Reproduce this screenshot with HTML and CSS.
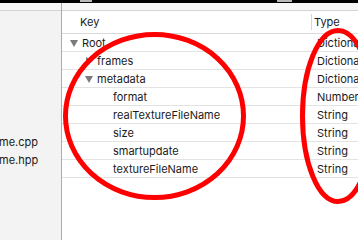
FILE: index.html
```html
<!DOCTYPE html>
<html>
<head>
<meta charset="utf-8">
<link rel="stylesheet" href="styles.css">
</head>
<body>
<div class="screen">
  <div class="topbar">
    <span class="tb-patch tb-a"></span>
    <span class="tb-patch tb-b"></span>
  </div>
  <div class="panes">
    <aside class="sidebar">
      <div class="strip"></div>
      <ul class="files">
        <li class="file">me.cpp</li>
        <li class="file">me.hpp</li>
      </ul>
    </aside>
    <main class="editor">
      <div class="strip"></div>
      <div class="head">
        <div class="c-key">Key</div>
        <div class="c-type"><span class="col-sep"></span>Type</div>
      </div>
      <div class="row">
        <div class="c-key lvl0"><span class="tri down"></span>Root</div>
        <div class="c-type">Dictionary</div>
      </div>
      <div class="row">
        <div class="c-key lvl1"><span class="tri right"></span>frames</div>
        <div class="c-type">Dictionary</div>
      </div>
      <div class="row">
        <div class="c-key lvl1"><span class="tri down"></span>metadata</div>
        <div class="c-type">Dictionary</div>
      </div>
      <div class="row">
        <div class="c-key lvl2"><span class="tri"></span>format</div>
        <div class="c-type">Number</div>
      </div>
      <div class="row">
        <div class="c-key lvl2"><span class="tri"></span>realTextureFileName</div>
        <div class="c-type">String</div>
      </div>
      <div class="row">
        <div class="c-key lvl2"><span class="tri"></span>size</div>
        <div class="c-type">String</div>
      </div>
      <div class="row">
        <div class="c-key lvl2"><span class="tri"></span>smartupdate</div>
        <div class="c-type">String</div>
      </div>
      <div class="row">
        <div class="c-key lvl2"><span class="tri"></span>textureFileName</div>
        <div class="c-type">String</div>
      </div>
    </main>
  </div>
  <svg class="marks" width="358" height="240" viewBox="0 0 358 240">
    <ellipse cx="154.5" cy="116" rx="89" ry="81.5" fill="none" stroke="#ff0000" stroke-width="5"/>
    <ellipse cx="338" cy="116" rx="35.5" ry="85.5" fill="none" stroke="#ff0000" stroke-width="5"/>
  </svg>
</div>
</body>
</html>
```
FILE: styles.css
```css
html, body {
  margin: 0;
  padding: 0;
  background: #ffffff;
}
.screen {
  position: relative;
  width: 358px;
  height: 240px;
  overflow: hidden;
  font-family: Inter, "Liberation Sans", sans-serif;
  font-size: 11px;
  color: #1a1a1a;
}
.topbar {
  height: 3px;
  background: #000;
  position: relative;
}
.tb-patch {
  position: absolute;
  top: 0;
  height: 2px;
  background: #b8b8b8;
}
.tb-a { left: 80px; width: 12px; }
.tb-b { left: 277px; width: 15px; }
.panes {
  display: flex;
  height: 237px;
}
.sidebar {
  width: 61px;
  flex: none;
  background: #f3f3f3;
  border-right: 1px solid #ababab;
  overflow: hidden;
}
.strip {
  height: 7px;
  background: #f7f7f7;
  border-bottom: 1px solid #d4d4d4;
}
.files {
  list-style: none;
  margin: 0;
  padding: 122px 0 0 0;
}
.file {
  height: 18px;
  line-height: 18px;
  margin-left: -1px;
  white-space: nowrap;
}
.editor {
  flex: 1;
  background: #fff;
}
.head, .row {
  display: flex;
  border-bottom: 1px solid #e3e3e3;
}
.head {
  height: 22px;
  align-items: center;
  border-bottom-color: #d9d9d9;
}
.row {
  height: 17px;
  align-items: center;
}
.c-key {
  width: 249px;
  flex: none;
  display: flex;
  align-items: center;
  white-space: nowrap;
}
.head .c-key { padding-left: 18px; width: 231px; }
.c-type {
  flex: 1;
  white-space: nowrap;
  overflow: hidden;
  padding-left: 6px;
}
.head .c-type {
  display: flex;
  align-items: center;
  padding-left: 0;
  height: 100%;
}
.col-sep {
  width: 1px;
  height: 16px;
  background: #d6d6d6;
  margin-right: 2px;
}
.lvl0 { padding-left: 8px; width: 241px; }
.lvl1 { padding-left: 23px; width: 226px; }
.lvl2 { padding-left: 39px; width: 210px; }
.tri {
  width: 12px;
  height: 8px;
  flex: none;
  position: relative;
}
.tri.down::before {
  content: "";
  position: absolute;
  left: 0;
  top: 1px;
  border-left: 4px solid transparent;
  border-right: 4px solid transparent;
  border-top: 7px solid #7b7b7b;
}
.tri.right::before {
  content: "";
  position: absolute;
  left: 1px;
  top: 0;
  border-top: 4px solid transparent;
  border-bottom: 4px solid transparent;
  border-left: 7px solid #7b7b7b;
}
.marks {
  position: absolute;
  left: 0;
  top: 0;
}
```
